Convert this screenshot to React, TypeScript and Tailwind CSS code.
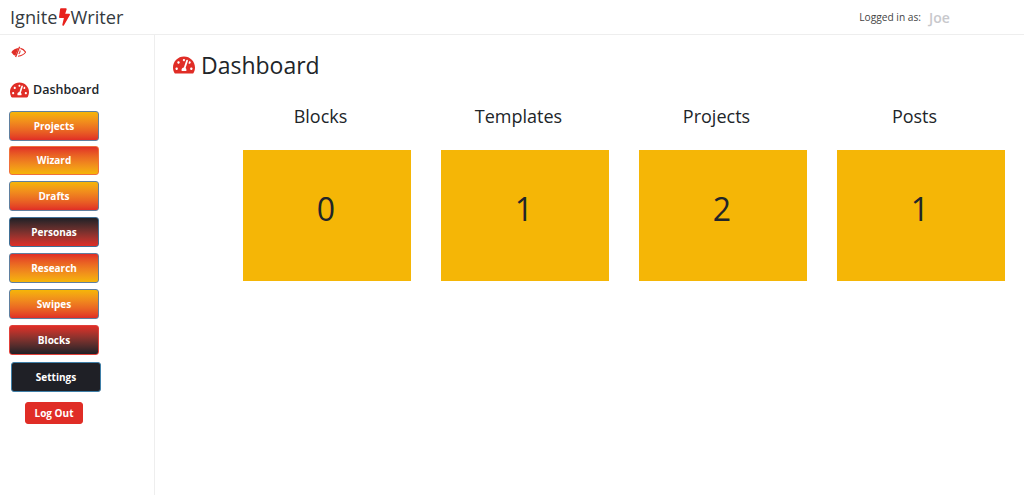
import React from 'react';
import { FaBolt, FaTachometerAlt } from 'react-icons/fa';

const navItems = [
  { label: 'Projects', className: 'h-[30px] bg-gradient-to-b from-[#f5b506] to-[#e02d26] border-[#5f7f9f]' },
  { label: 'Wizard', className: 'h-[29px] bg-gradient-to-b from-[#e02d26] to-[#f5b506] border-[#f0703a] mt-[-1px]' },
  { label: 'Drafts', className: 'h-[30px] bg-gradient-to-b from-[#f5b506] to-[#e02d26] border-[#5f7f9f]' },
  { label: 'Personas', className: 'h-[30px] bg-gradient-to-b from-[#1f2026] to-[#e02d26] border-[#3f6f95]' },
  { label: 'Research', className: 'h-[30px] bg-gradient-to-b from-[#e02d26] to-[#f5b506] border-[#5f7f9f]' },
  { label: 'Swipes', className: 'h-[30px] bg-gradient-to-b from-[#f5b506] to-[#e02d26] border-[#5f7f9f]' },
  { label: 'Blocks', className: 'h-[30px] bg-gradient-to-b from-[#e02d26] to-[#1f2026] border-[#e0403a]' },
];

const stats = [
  { title: 'Blocks', value: 0 },
  { title: 'Templates', value: 1 },
  { title: 'Projects', value: 2 },
  { title: 'Posts', value: 1 },
];

// old style eye-slash: solid on the left of the slash, outline on the right
function EyeSlash() {
  return (
    <svg viewBox="0 0 15 12" className="ml-[11px] mt-[11px] h-[12px] w-[15px] text-[#e02d26]">
      <path d="M0.3 6.2Q3 2.6 7.4 2.1L4.4 9.8Q2.2 9 0.3 6.2Z" fill="currentColor" />
      <path d="M8.6 0.7L4.6 10.9" stroke="currentColor" strokeWidth="1.3" fill="none" />
      <path d="M9.4 2.4Q12.6 3 14.6 6.2Q12.2 9.6 7 10.2M8.8 4.6Q9.6 6 7.8 8" stroke="currentColor" strokeWidth="1.1" fill="none" />
    </svg>
  );
}

export default function App() {
  return (
    <div className="h-[495px] w-[1024px] overflow-hidden bg-white font-['Open_Sans',sans-serif] text-[#212529]">
      <header className="flex h-[35px] items-center justify-between border-b border-[#eeeeee] pl-[10px] pr-[50px]">
        <div className="flex items-center text-[18.2px] leading-none text-[#343a40]">
          <span>Ignite</span>
          <FaBolt className="ml-[2px] h-[18px] w-[11px] text-[#e8211c]" />
          <span>Writer</span>
        </div>
        <div className="flex items-center pt-[1px] text-[10.2px] text-[#444444]">
          <span>Logged in as:</span>
          <span className="ml-[8px] w-[45px] text-[14px] font-semibold text-[#c8c8cc]">Joe</span>
        </div>
      </header>

      <div className="flex h-[460px]">
        <aside className="w-[155px] shrink-0 border-r border-[#eeeeee]">
          <EyeSlash />
          <div className="ml-[10px] mt-[20px] flex h-[24px] items-center gap-[4px] text-[12.5px] font-semibold">
            <FaTachometerAlt className="h-[18px] w-[19px] text-[#e02d26]" />
            <span>Dashboard</span>
          </div>
          <nav className="ml-[9px] mt-[9px] flex flex-col items-start gap-[6px]">
            {navItems.map((item) => (
              <button
                key={item.label}
                className={`w-[90px] rounded-[3px] border text-[10px] font-bold text-white ${item.className}`}
              >
                {item.label}
              </button>
            ))}
            <button className="ml-[2px] mt-[1px] h-[30px] w-[90px] rounded-[3px] border border-[#3f7fa8] bg-[#1f2026] text-[10px] font-bold text-white">
              Settings
            </button>
            <button className="ml-[16px] mt-[4px] h-[22px] w-[58px] rounded-[3px] border border-[#e02d26] bg-[#e02d26] text-[10px] font-bold text-white">
              Log Out
            </button>
          </nav>
        </aside>

        <main className="flex-1 pl-[18px]">
          <div className="mt-[15px] flex h-[30px] items-center gap-[6px] text-[23px] font-medium text-[#212529]">
            <FaTachometerAlt className="h-[20px] w-[22px] text-[#e02d26]" />
            <span>Dashboard</span>
          </div>
          <div className="ml-[70px] mt-[24px] flex gap-[30px]">
            {stats.map((stat) => (
              <div key={stat.title} className="w-[168px]">
                <div className="h-[46px] pr-[13px] text-center text-[18px] font-medium leading-[24px]">{stat.title}</div>
                <div className="flex h-[131px] items-center justify-center bg-[#f5b606] pb-[13px] pr-[2px] text-[32px] font-medium">
                  {stat.value}
                </div>
              </div>
            ))}
          </div>
        </main>
      </div>
    </div>
  );
}
